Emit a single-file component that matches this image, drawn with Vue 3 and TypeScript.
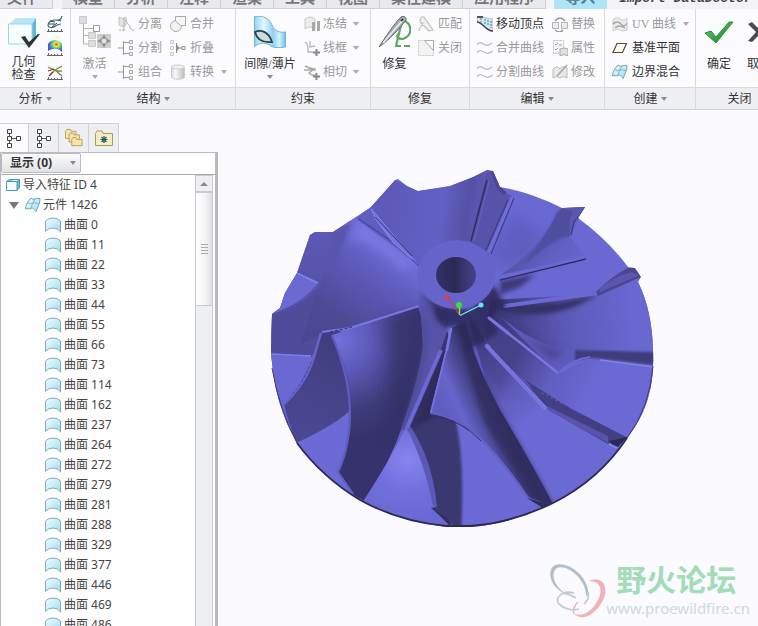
<script setup lang="ts">
import { ref } from 'vue'

interface Command {
  icon: string
  label: string
  off?: boolean
  menu?: boolean
}
interface BigCommand extends Command {
  lines: string[]
}
interface Group {
  id: string
  label: string
  menu?: boolean
  big: BigCommand[]
  columns: Command[][]
}

const tabs = ['模型', '分析', '注释', '渲染', '工具', '视图', '柔性建模', '应用程序', '导入']

const groups: Group[] = [
  {
    id: 'analysis', label: '分析', menu: true,
    big: [{ icon: 'geomcheck', label: '几何检查', lines: ['几何', '检查'] }],
    columns: [[
      { icon: 'curvature', label: '' },
      { icon: 'colormap', label: '' },
      { icon: 'knots', label: '' },
    ]],
  },
  {
    id: 'structure', label: '结构', menu: true,
    big: [{ icon: 'activate', label: '激活', lines: ['激活'], off: true, menu: true }],
    columns: [
      [
        { icon: 'separate', label: '分离', off: true },
        { icon: 'split', label: '分割', off: true },
        { icon: 'split', label: '组合', off: true },
      ],
      [
        { icon: 'merge', label: '合并', off: true },
        { icon: 'fold', label: '折叠', off: true },
        { icon: 'convert', label: '转换', off: true, menu: true },
      ],
    ],
  },
  {
    id: 'constrain', label: '约束',
    big: [{ icon: 'gap', label: '间隙/薄片', lines: ['间隙/薄片'], menu: true }],
    columns: [[
      { icon: 'freeze', label: '冻结', off: true, menu: true },
      { icon: 'wire', label: '线框', off: true, menu: true },
      { icon: 'tangent', label: '相切', off: true, menu: true },
    ]],
  },
  {
    id: 'repair', label: '修复',
    big: [{ icon: 'needle', label: '修复', lines: ['修复'] }],
    columns: [[
      { icon: 'match', label: '匹配', off: true },
      { icon: 'close', label: '关闭', off: true },
    ]],
  },
  {
    id: 'edit', label: '编辑', menu: true, big: [],
    columns: [
      [
        { icon: 'movevertex', label: '移动顶点' },
        { icon: 'curves', label: '合并曲线', off: true },
        { icon: 'curves', label: '分割曲线', off: true },
      ],
      [
        { icon: 'replace', label: '替换', off: true },
        { icon: 'props', label: '属性', off: true },
        { icon: 'modify', label: '修改', off: true },
      ],
    ],
  },
  {
    id: 'create', label: '创建', menu: true, big: [],
    columns: [[
      { icon: 'uv', label: 'UV 曲线', off: true, menu: true },
      { icon: 'plane', label: '基准平面' },
      { icon: 'quilt', label: '边界混合' },
    ]],
  },
  {
    id: 'finish', label: '关闭',
    big: [
      { icon: 'ok', label: '确定', lines: ['确定'] },
      { icon: 'cancel', label: '取消', lines: ['取消'] },
    ],
    columns: [],
  },
]

const navTabs = [
  { icon: 'tree', label: '模型树' },
  { icon: 'tree', label: '层树' },
  { icon: 'folders', label: '文件夹浏览器' },
  { icon: 'favorites', label: '收藏夹' },
]
const activeNav = ref(0)

const surfaces = [0, 11, 22, 33, 44, 55, 66, 73, 114, 162, 237, 264, 272, 279, 281, 288, 329, 377, 446, 469, 486]
const expanded = ref(true)
</script>

<template>
  <div class="app">
    <svg class="defs" aria-hidden="true">
      <defs>
        <linearGradient id="gBlue" x1="0" y1="0" x2="1" y2="1">
          <stop offset="0" stop-color="#f4fcff" /><stop offset="1" stop-color="#9cdcf2" />
        </linearGradient>
        <linearGradient id="gSheet" x1="0" y1="0" x2="1" y2="0">
          <stop offset="0" stop-color="#8fd4f2" /><stop offset=".3" stop-color="#e6f8ff" /><stop offset=".6" stop-color="#8fd0ee" /><stop offset=".8" stop-color="#d5f2fd" /><stop offset="1" stop-color="#6fbfe6" />
        </linearGradient>
        <radialGradient id="gRainbow" cx=".6" cy=".35" r=".6">
          <stop offset="0" stop-color="#ef3a2e" /><stop offset=".3" stop-color="#f3e43c" /><stop offset=".55" stop-color="#45d37a" /><stop offset=".8" stop-color="#3d7be8" /><stop offset="1" stop-color="#6a3fd0" />
        </radialGradient>
        <linearGradient id="gOk" x1="0" y1="0" x2="1" y2="1">
          <stop offset="0" stop-color="#6fd06a" /><stop offset="1" stop-color="#13782c" />
        </linearGradient>
        <linearGradient id="gGray" x1="0" y1="0" x2="1" y2="0">
          <stop offset="0" stop-color="#dcdcdc" /><stop offset=".3" stop-color="#f8f8f8" /><stop offset="1" stop-color="#bcbcbc" />
        </linearGradient>
      </defs>
      <symbol id="i-geomcheck" viewBox="0 0 32 32">
        <path d="M1 8 8 2h20l-4 6z" fill="#b9e6f5" />
        <path d="M24 8 28 2v18l-4 8z" fill="#5cb9d8" />
        <path d="M.5 8H24v20H.500z" fill="#f6fdff" stroke="#9bd5e8" />
        <path d="m13 21 4-1 4 6 9-8h2L21 32z" fill="#333" />
      </symbol>
      <symbol id="i-curvature" viewBox="0 0 16 16">
        <path d="M15 0c-1 5-4 4-7 4S1 6 1 9s4 3 6 2 3-3 7-3" fill="none" stroke="#2b6f7d" stroke-width="1.200" />
        <path d="m3 5 5 1m-6 2 6 0m-3 3 5-4M11 4l3 1" stroke="#444" fill="none" />
        <path d="M0 15.500h16M1.500 13v3m3-2v2m3-2v2m3-2v2m4-3v3" stroke="#666" fill="none" />
      </symbol>
      <symbol id="i-colormap" viewBox="0 0 16 16">
        <path d="M1 4c3-5 10-5 14 0v8c-4-4-9-4-14-1z" fill="url(#gRainbow)" />
        <path d="M0 15.500h16M1.500 13v3m3-2v2m3-2v2m3-2v2m4-3v3" stroke="#666" fill="none" />
      </symbol>
      <symbol id="i-knots" viewBox="0 0 16 16">
        <path d="M1 3c4 2 8 5 14 4M3 11l5-5 7-4M8 6l7 6" fill="none" stroke="#6d8a3a" stroke-width="1.300" />
        <path d="m1 7 6-2M2 12l4-4" stroke="#8a3a2f" stroke-width="1.200" />
        <path d="M0 15.500h16M1.500 13v3m3-2v2m3-2v2m3-2v2m4-3v3" stroke="#666" fill="none" />
      </symbol>
      <symbol id="i-activate" viewBox="0 0 32 32">
        <path d="M4.500 8v20H9M4.500 12.500h10M4.500 19.500H9" fill="none" stroke="#b0b0b0" />
        <path d="M.500.500h7v7h-7zM9.500 16.500h7v6h-7zM9.500 24.500h7v6h-7z" fill="#dcdcdc" stroke="#cacaca" />
        <path d="M14.500 9.500h6v6h-6z" fill="#fff" stroke="#999" />
        <path d="M18 18h14v14H18z" fill="#cdcdcd" />
        <path d="m25 18 2 4.500 5 2.500-5 2.500-2 4.500-2-4.500-5-2.500 5-2.500z" fill="#8a8a8a" />
        <circle cx="25" cy="25" r="2.500" fill="#e4e4e4" />
      </symbol>
      <symbol id="i-separate" viewBox="0 0 16 16">
        <path d="M1 1q3 3 7 0v8q-4 3-7 0z" fill="#e4e4e4" stroke="#c4c4c4" />
        <path d="M8 4c1 5 4 4 4 8l4 3M6 2v13" fill="none" stroke="#b0b0b0" /><path d="M1 14h2m1 0h2" stroke="#aaa" />
      </symbol>
      <symbol id="i-split" viewBox="0 0 16 16">
        <path d="M0 8h5M5.500 1v14M5.500 2.500H11M5.500 13.500H11" fill="none" stroke="#999" />
        <path d="M11.500.500h3v3h-3zM11.500 6.500h3v3h-3zM11.500 12.500h3v3h-3z" fill="#eee" stroke="#aaa" />
      </symbol>
      <symbol id="i-merge" viewBox="0 0 16 16">
        <circle cx="6" cy="10" r="5.500" fill="#f2f2f2" stroke="#aaa" /><path d="M5.500.500h10v9h-5L5.500 5z" fill="#f6f6f6" stroke="#aaa" />
      </symbol>
      <symbol id="i-fold" viewBox="0 0 16 16">
        <path d="M.500.500h3v3h-3zM.500 6.500h3v3h-3zM.500 12.500h3v3h-3z" fill="#f4f4f4" stroke="#bbb" stroke-dasharray="2 1" />
        <path d="M6.500 3v10M7 8h5" stroke="#888" /><path d="M12 6.500h3v3h-3z" fill="#eee" stroke="#999" /><path d="m7 5 3 3-3 3z" fill="#999" />
      </symbol>
      <symbol id="i-convert" viewBox="0 0 16 16">
        <path d="M1.500 3v10c0 3 13 3 13 0V3z" fill="url(#gGray)" stroke="#ccc" /><ellipse cx="8" cy="3" rx="6.500" ry="2" fill="#f0f0f0" stroke="#ccc" />
      </symbol>
      <symbol id="i-gap" viewBox="0 0 32 32">
        <path d="M.500.500C8-1 15 2 18 9c2 6 8 8 13.500 7v15c-7 1-13 1-16-2-5-3-11-2-15 1.500z" fill="url(#gSheet)" stroke="#6cb4d3" />
        <path d="M1 16c6-3 14 0 17 10-9 1-15-2-17-10z" fill="#cfdcde" stroke="#29444c" stroke-width="1.800" />
      </symbol>
      <symbol id="i-freeze" viewBox="0 0 16 16">
        <path d="M1 3q5-4 10 0v10q-5-4-10 0z" fill="#ececec" stroke="#c8c8c8" /><path d="M8 6h3v9H8zM13 5h3v10h-3z" fill="#a8a8a8" />
      </symbol>
      <symbol id="i-wire" viewBox="0 0 16 16">
        <path d="M1 2c3 2 3 5 3 10h5M6 1v6l5-1" fill="none" stroke="#b5b5b5" stroke-width="1.300" /><path d="M9 12.500h7M12.500 9v7" stroke="#888" stroke-width="2" />
      </symbol>
      <symbol id="i-tangent" viewBox="0 0 16 16">
        <path d="M1 2q5 3 9 3L5 9q3 3 6 2M0 6h12" fill="none" stroke="#aaa" stroke-width="1.500" /><path d="M9 12.500h7M12.500 9v7" stroke="#888" stroke-width="2" />
      </symbol>
      <symbol id="i-needle" viewBox="0 0 32 32">
        <path d="M26 5c7 4 8 14-2 18-5 0-7-2-5-5M22 9l-5 21M16 30h6m3 0h6" fill="none" stroke="#62a35f" stroke-width="2.200" />
        <path d="M0 31C6 22 14 9 22 1c3-2 6 1 5 3C21 12 10 24 0 31z" fill="#a5abaf" stroke="#5d6264" />
        <path d="M4 27 23 5" stroke="#f2f2f2" stroke-width="1.500" /><path d="m22 5 2-2" stroke="#222" stroke-width="1.500" />
      </symbol>
      <symbol id="i-match" viewBox="0 0 16 16">
        <path d="M2 6q0-6 4-5l9 13-4 1zM1 15c0-4 4-5 4-9" fill="#f0f0f0" stroke="#c2c2c2" stroke-width="1.200" />
      </symbol>
      <symbol id="i-close" viewBox="0 0 16 16">
        <path d="M.500.500h15v15H.500z" fill="#f2f2f2" stroke="#c8c8c8" stroke-dasharray="2 1" /><path d="M6.500.500h9v10z" fill="#fff" stroke="#aaa" />
      </symbol>
      <symbol id="i-movevertex" viewBox="0 0 16 16">
        <path d="M0 1c6-1 11 2 16 2v12C10 15 8 8 0 6z" fill="#d3e7ef" stroke="#b5c2c7" />
        <path d="M0 6c6 0 8 9 16 9" fill="none" stroke="#444" stroke-width="1.500" />
        <path d="M4 2v4m4-3v5m3-4v6m3-5v7" stroke="#2e7fa2" stroke-dasharray="2 1" /><path d="M0 0h6v2H0z" fill="#555" />
      </symbol>
      <symbol id="i-curves" viewBox="0 0 16 16">
        <path d="M0 5c5-7 7 5 15-2M0 13c5-7 7 5 16-2" fill="none" stroke="#bbb" stroke-width="1.300" />
      </symbol>
      <symbol id="i-replace" viewBox="0 0 16 16">
        <path d="M.500 6.500h6v6h-6zM9.500 6.500h6v6h-6z" fill="#ececec" stroke="#b5b5b5" /><path d="M3 5q5-6 10 0M3 14q5 4 8 0" fill="none" stroke="#999" stroke-width="1.400" />
      </symbol>
      <symbol id="i-props" viewBox="0 0 16 16">
        <path d="M1.500.500h10v13h-10z" fill="#f6f6f6" stroke="#c0c0c0" stroke-dasharray="2 1" /><path d="m3 4 1 1 2-2M3 9l1 1 2-2M7 5h3" fill="none" stroke="#999" /><path d="M8 9q4-2 8 0v7q-4-3-8 0z" fill="#e0e0e0" stroke="#aaa" />
      </symbol>
      <symbol id="i-modify" viewBox="0 0 16 16">
        <path d="M1 5q4-4 7 0 3-4 7-1v10q-4-3-7 0-3-3-7 0z" fill="#e8e8e8" stroke="#bbb" /><path d="M5 12 15 1" stroke="#aaa" stroke-width="1.800" />
      </symbol>
      <symbol id="i-uv" viewBox="0 0 16 16">
        <path d="M1 4q3-4 7-1t7-1v12q-4 2-7 0t-7 1z" fill="#ececec" stroke="#cacaca" /><path d="M1 8q4-4 8 0t6-1M3 12q4-4 10 0" fill="none" stroke="#a5a5a5" stroke-width="1.300" />
      </symbol>
      <symbol id="i-plane" viewBox="0 0 16 16">
        <path d="M5 3.500h9.500l-4 9H1z" fill="#fffdf2" stroke="#5c4a31" stroke-width="1.200" />
      </symbol>
      <symbol id="i-quilt" viewBox="0 0 16 16">
        <path d="M.500 12C1 7 3 4 6 1q2 2 4 1t5-.500c0 5-2 8-4 13-2-3-3-4-5-3s-4-.500-5.500.500z" fill="url(#gBlue)" stroke="#6fa6b9" />
        <path d="M3 6q3 1 5 0t6 1M10 2Q7 7 6 11" fill="none" stroke="#7fb3c5" />
      </symbol>
      <symbol id="i-ok" viewBox="0 0 32 32">
        <path d="m2 17 6-2 5 6L26 6h4L13 27z" fill="url(#gOk)" stroke="#2b8d3b" />
      </symbol>
      <symbol id="i-cancel" viewBox="0 0 32 32">
        <path d="m5 8 4-2 7 7 7-7 4 2-8 8 8 9-4 1-7-7-7 7-4-1 8-9z" fill="#484a50" />
      </symbol>
      <symbol id="i-tree" viewBox="0 0 18 20">
        <path d="M4.500 5v11M7 10.500h5" stroke="#555" fill="none" />
        <path d="M2.500 1.500h4v4h-4zM2.500 8.500h4v4h-4zM2.500 15.500h4v4h-4zM11.500 8.500h4v4h-4z" fill="#fff" stroke="#444" />
      </symbol>
      <symbol id="i-folders" viewBox="0 0 20 20">
        <g fill="#f8e3ac" stroke="#b39a5e">
          <path d="M.500 2.500 2 .500h4l1 2h5v8H.500z" /><path d="m4.500 6.500 1.500-2h3l1 2h6v8H4.500z" /><path d="m7.500 11.500 1.500-2h3l1 2h6v7H7.500z" />
        </g>
      </symbol>
      <symbol id="i-favorites" viewBox="0 0 18 18">
        <path d="M.500 4.500 2 2h5l1 2.500h9.500v12H.500z" fill="#fbecc0" stroke="#b39a5e" />
        <path d="M9 7v7m-3.500-3.500h7M6.500 8l5 5m0-5-5 5" stroke="#156070" stroke-width="1.200" />
      </symbol>
      <symbol id="i-part" viewBox="0 0 14 14">
        <path d="m.500 3.500 3-2h10l-2.500 2v9l2.500-3v-8" fill="#6cc3de" stroke="#4a9bb8" /><path d="M.500 3.500h10.500v9H.500z" fill="#f6fdff" stroke="#4a9bb8" />
      </symbol>
      <symbol id="i-surface" viewBox="0 0 16 16">
        <path d="M.500 4Q3 1 8 1t7.500 3v11Q13 11 8 11T.500 14.500z" fill="url(#gBlue)" stroke="#86aab8" />
      </symbol>
    </svg>

    <nav class="tabs" aria-label="功能区">
      <a class="tab file" href="#">文件<i class="caret" /></a>
      <a v-for="t in tabs" :key="t" href="#" class="tab" :class="{ active: t === '导入' }">{{ t }}</a>
      <span class="context">Import DataDoctor</span>
    </nav>

    <header class="ribbon">
      <section v-for="g in groups" :key="g.id" class="group" :class="g.id">
        <div class="commands">
          <button v-for="b in g.big" :key="b.icon" type="button" class="big" :disabled="b.off">
            <svg class="icon32"><use :href="'#i-' + b.icon" /></svg>
            <span class="big-label" :class="{ two: b.lines.length > 1 }">
              <span v-for="l in b.lines" :key="l">{{ l }}</span>
            </span>
            <i v-if="b.menu" class="caret" />
          </button>
          <div v-for="(col, ci) in g.columns" :key="ci" class="column">
            <button v-for="(c, i) in col" :key="i" type="button" class="small" :disabled="c.off">
              <svg class="icon16"><use :href="'#i-' + c.icon" /></svg>
              <span v-if="c.label">{{ c.label }}</span>
              <i v-if="c.menu" class="caret" />
            </button>
          </div>
        </div>
        <div class="caption">{{ g.label }}<i v-if="g.menu" class="caret" /></div>
      </section>
    </header>

    <main class="work">
      <aside class="side">
        <div class="nav-tabs">
          <button
            v-for="(n, i) in navTabs" :key="i" type="button" class="nav-tab"
            :class="{ on: i === activeNav }" :aria-label="n.label" @click="activeNav = i"
          >
            <svg class="icon-nav"><use :href="'#i-' + n.icon" /></svg>
          </button>
        </div>
        <div class="panel">
          <div class="filter">
            <button type="button" class="show">显示 (0)<i class="caret" /></button>
          </div>
          <div class="tree-box">
            <ul class="tree">
              <li class="row root"><svg class="icon14"><use href="#i-part" /></svg>导入特征 ID 4</li>
              <li class="row quilt">
                <button type="button" class="twist" aria-label="展开" @click="expanded = !expanded" />
                <svg class="icon16"><use href="#i-quilt" /></svg>元件 1426
              </li>
              <template v-if="expanded">
                <li v-for="s in surfaces" :key="s" class="row leaf">
                  <svg class="icon16"><use href="#i-surface" /></svg>曲面 {{ s }}
                </li>
              </template>
            </ul>
            <div class="scroll">
              <button type="button" class="scroll-up" aria-label="向上滚动"><i /></button>
              <div class="thumb"><i /><i /><i /><i /></div>
            </div>
          </div>
        </div>
      </aside>

      <div class="canvas">
        <svg class="model" viewBox="218 110 540 516" role="img" aria-label="叶轮">
          <defs>
            <clipPath id="sil">
              <path d="M271 350 272 314 280 308 285 293 297 273 310 235 315 232 333 232 370 208 395 180 398 179 407 186 418 191 450 186 473 177 487 170 493 171 500 187Q530 192 562 208L585 207 578 218Q608 240 628 267L635 268 641 277 638 282Q652 310 653 350Q655 385 643 412Q636 427 627 438Q599 480 553 503 Q512 524 470 527 L447 527 Q400 522 360 500 Q322 477 297 443 Q274 405 271 350z" />
            </clipPath>
            <filter id="s1" x="-30%" y="-30%" width="160%" height="160%"><feGaussianBlur stdDeviation="1" /></filter>
            <filter id="s2" x="-30%" y="-30%" width="160%" height="160%"><feGaussianBlur stdDeviation="2" /></filter>
            <filter id="s4" x="-50%" y="-50%" width="200%" height="200%"><feGaussianBlur stdDeviation="4" /></filter>
            <filter id="s6" x="-50%" y="-50%" width="200%" height="200%"><feGaussianBlur stdDeviation="7" /></filter>
            <linearGradient id="top" gradientUnits="userSpaceOnUse" x1="385" y1="190" x2="490" y2="205">
              <stop offset="0" stop-color="#5c59b8" /><stop offset=".55" stop-color="#6260c4" /><stop offset=".8" stop-color="#5451a4" /><stop offset="1" stop-color="#625fc4" />
            </linearGradient>
            <linearGradient id="left" gradientUnits="userSpaceOnUse" x1="390" y1="235" x2="310" y2="345">
              <stop offset="0" stop-color="#7674e0" /><stop offset=".3" stop-color="#5f5cbe" /><stop offset=".7" stop-color="#4d4a96" /><stop offset="1" stop-color="#4a4791" />
            </linearGradient>
            <linearGradient id="far" gradientUnits="userSpaceOnUse" x1="330" y1="225" x2="300" y2="340">
              <stop offset="0" stop-color="#5e5bba" /><stop offset="1" stop-color="#4e4b98" />
            </linearGradient>
            <radialGradient id="b3" gradientUnits="userSpaceOnUse" cx="338" cy="340" r="100">
              <stop offset="0" stop-color="#7371dd" /><stop offset=".35" stop-color="#5b58b6" /><stop offset=".75" stop-color="#3d3a78" /><stop offset="1" stop-color="#36336c" />
            </radialGradient>
            <linearGradient id="b2" gradientUnits="userSpaceOnUse" x1="300" y1="435" x2="340" y2="350">
              <stop offset="0" stop-color="#4b4893" /><stop offset="1" stop-color="#413e7f" />
            </linearGradient>
            <linearGradient id="b5" gradientUnits="userSpaceOnUse" x1="437" y1="395" x2="492" y2="370">
              <stop offset="0" stop-color="#605dc0" /><stop offset=".25" stop-color="#6765ca" /><stop offset=".55" stop-color="#494690" /><stop offset=".85" stop-color="#2f2c5b" /><stop offset="1" stop-color="#35326a" />
            </linearGradient>
            <linearGradient id="w6" gradientUnits="userSpaceOnUse" x1="475" y1="340" x2="530" y2="420">
              <stop offset="0" stop-color="#3f3c7c" /><stop offset=".5" stop-color="#5956b0" /><stop offset="1" stop-color="#6b69d3" />
            </linearGradient>
            <linearGradient id="w7" gradientUnits="userSpaceOnUse" x1="512" y1="360" x2="590" y2="395">
              <stop offset="0" stop-color="#45428a" /><stop offset=".5" stop-color="#605ec0" /><stop offset="1" stop-color="#6b69d3" />
            </linearGradient>
            <linearGradient id="w8" gradientUnits="userSpaceOnUse" x1="495" y1="320" x2="630" y2="310">
              <stop offset="0" stop-color="#3a3773" /><stop offset=".5" stop-color="#5b59b6" /><stop offset="1" stop-color="#6967d0" />
            </linearGradient>
            <radialGradient id="w4" gradientUnits="userSpaceOnUse" cx="408" cy="460" r="62">
              <stop offset="0" stop-color="#8785ee" /><stop offset=".5" stop-color="#7270dd" /><stop offset="1" stop-color="#6a68d2" />
            </radialGradient>
            <linearGradient id="b9" gradientUnits="userSpaceOnUse" x1="530" y1="235" x2="570" y2="270">
              <stop offset="0" stop-color="#5451a6" /><stop offset=".6" stop-color="#6260c3" /><stop offset="1" stop-color="#6765ca" />
            </linearGradient>
            <linearGradient id="hole" x1="0" y1="0" x2="1" y2="0">
              <stop offset="0" stop-color="#35326a" /><stop offset=".45" stop-color="#2b2853" /><stop offset="1" stop-color="#46438c" />
            </linearGradient>
          </defs>
          <g clip-path="url(#sil)">
            <path d="M260 160H670V540H260z" fill="#6a68d2" />
            <path d="M490 256 510 270 528 262 545 238 515 215z" fill="#5c5ab8" opacity=".7" filter="url(#s6)" />
            <path d="M370 208 395 180 407 186 418 191 450 186 473 177 487 170 488 182 470 250 418 268z" fill="url(#top)" />
            <path d="M487 170 493 171 501 190 513 197 488 256 470 243z" fill="#5653a9" />
            <path d="M493 170 500 186 507 193 503 195 497 188 491 173z" fill="#4a4790" />
            <path d="M487 180 471 241" stroke="#302d60" stroke-width="1.500" /><path d="M489 182 474 241" stroke="#6664ca" />
            <path d="M512 197 488 253" stroke="#6f6dd8" stroke-width="3" /><path d="M514 198 491 254M508 200 486 250" stroke="#3b3874" />

            <path d="M260 340 260 225 315 225 333 232 370 208 360 240 330 340z" fill="url(#far)" />
            <path d="M270 362V318Q306 307 330 275L335 325 322 335 312 357z" fill="#4f4c99" />
            <path d="M333 232 370 206 420 266 424 308 322 334 300 345 325 270Q342 250 347 232z" fill="url(#left)" />
            <path d="M331 231 352 222Q344 237 338 258 330 268 322 275 336 255 331 231z" fill="#5855ad" filter="url(#s2)" />
            <path d="M360 221Q378 236 414 266L402 272Q372 240 350 240z" fill="#8482ed" opacity=".55" filter="url(#s4)" />
            <path d="M356 219 371 206 375 218 393 242 419 266 399 250z" fill="#605dbf" />
            <path d="M359 219 390 240 419 266" fill="none" stroke="#413e80" />
            <path d="M371 209 376 219 393 242 412 259" fill="none" stroke="#807ee8" stroke-width="1.500" />
            <path d="M375 217 397 240 412 256" fill="none" stroke="#36336c" />
            <path d="M272 314 280 308 285 293 297 273 318 283Q302 304 272 314z" fill="#6b69d3" />
            <path d="M297 273 318 283" stroke="#8482ea" stroke-width="1.800" />
            <path d="M270 354 311 356Q306 384 284 407L270 400z" fill="#6a68d2" />
            <path d="M270 354 311 356" stroke="#807ee6" stroke-width="1.500" />
            <path d="M322 332 340 330 352 400 350 415 297 445 283 405Q308 380 322 332z" fill="url(#b2)" />
            <path d="M321 333Q317 346 314 357Q306 384 283 405L288 425" fill="none" stroke="#6765ca" stroke-width="2.500" />
            <path d="M311 362Q305 381 290 397" fill="none" stroke="#4a4790" stroke-dasharray="2 3" />
            <path d="M296 443Q328 429 350 411L351 440 338 472 354 496 340 500z" fill="#6c6ad5" />
            <path d="M332 335 418 307 430 340Q420 375 403 424 391 462 364 501L354 495 338 472Q354 440 350 395 347 365 332 335z" fill="url(#b3)" />
            <path d="M385 320 424 310 424 350Q414 410 390 440 392 380 385 320z" fill="#302d60" opacity=".55" filter="url(#s6)" />
            <path d="M332 335Q346 368 349 396 353 440 338 472L353 494" fill="none" stroke="#605dc0" stroke-width="2.200" />
            <path d="M322 332 350 328 419 306" fill="none" stroke="#7876e0" stroke-width="2.200" />
            <path d="M330 332 352 327" stroke="#35326a" stroke-dasharray="3 2" />

            <path d="M420 306 450 310 442 352 407 430 401 430Q420 375 423 345z" fill="#5754aa" />
            <path d="M424 320Q432 345 403 428" fill="none" stroke="#4a4790" stroke-width="4" opacity=".7" filter="url(#s2)" />
            <path d="M406 427Q395 452 364 500L360 530H460L449 523 431 508 435 507Q428 465 406 427z" fill="url(#w4)" />
            <path d="M447 330 470 410 463 530 449 523 431 508 436 507Q430 465 407 427L441 350z" fill="#3a3771" />
            <path d="M445 345 448 410 412 428z" fill="#2f2c5b" filter="url(#s2)" />
            <path d="M407 429Q424 461 433 506L437 507Q433 460 409 424z" fill="#5b58b6" />
            <path d="M441 350 407 428" stroke="#6b69d3" stroke-width="4" /><path d="M444 353 411 428" stroke="#302d60" />
            <path d="M455 420Q464 455 461 530L560 530 528 497 475 435z" fill="#6c6ad5" />
            <path d="M456 424Q464 460 461 527" fill="none" stroke="#4a4790" stroke-width="2" filter="url(#s1)" />
            <path d="M466 310 488 345 547 409 625 450 600 500 553 506 500 430z" fill="url(#w6)" />
            <path d="M451 328 466 322Q470 352 500 410 530 460 554 506L528 497Q493 447 474 433 455 418 430 413L446 350z" fill="url(#b5)" />
            <path d="M468 335Q478 372 500 410 530 460 554 506L532 498Q505 455 486 425 472 385 462 345z" fill="#312e60" opacity=".8" filter="url(#s2)" />
            <path d="M470 330 490 345 510 375 498 395 478 355z" fill="#45428a" opacity=".6" filter="url(#s4)" />
            <path d="M430 413Q463 417 485 443 508 468 529 499" fill="none" stroke="#6361c5" stroke-width="2.200" /><path d="M430 415Q462 420 481 441" fill="none" stroke="#35326a" />
            <path d="M451 328 446 352 431 412" fill="none" stroke="#7674df" stroke-width="1.800" />
            <path d="M527 498 552 505 546 510z" fill="#302d60" /><path d="M431 507 449 520 452 528 447 523z" fill="#302d60" />

            <path d="M487 315 558 374 592 357 655 366V410L627 440 570 408 527 383 486 345z" fill="url(#w7)" />
            <path d="M525 380 547 409 608 444 628 438 570 408z" fill="#433f82" />
            <path d="M545 405 608 436 608 443 546 409z" fill="#5754aa" />
            <path d="M609 441 627 437 618 447 612 446z" fill="#2c2958" /><path d="M609 444 617 448" stroke="#8583ea" stroke-width="2" />
            <path d="M542 393 563 404" stroke="#6a68d2" stroke-dasharray="2 3" />
            <path d="M487 346 545 408" stroke="#7674df" stroke-width="4.500" stroke-linecap="round" /><path d="M491 347 548 407" stroke="#403d7d" />
            <path d="M490 300 597 294 638 280 656 300V350Q610 356 582 350L558 373 488 317z" fill="url(#w8)" />
            <path d="M500 316Q540 352 594 351L600 357Q570 360 558 374z" fill="#5f5cbe" />
            <path d="M512 325Q535 345 566 352L552 360z" fill="#413e80" opacity=".8" filter="url(#s4)" />
            <path d="M575 350 654 352V365L594 358Q585 356 575 361z" fill="#403d7d" filter="url(#s1)" />
            <path d="M600 360 654 367" stroke="#8583ea" stroke-width="1.500" />
            <path d="M490 319Q523 345 558 373" fill="none" stroke="#7876e0" stroke-width="2.500" /><path d="M558 373Q572 359 590 357" fill="none" stroke="#6f6dd8" stroke-width="1.500" />

            <path d="M498 305 560 302 597 295Q555 322 505 312z" fill="#343168" filter="url(#s2)" />
            <path d="M505 306 597 293" stroke="#6b69d3" stroke-width="4" stroke-linecap="round" />
            <path d="M596 292Q612 276 628 268L635 268 641 277 598 296z" fill="#4a4790" /><path d="M600 288Q614 277 631 272L640 275 600 292z" fill="#5a57b2" />
            <path d="M500 275Q536 254 557 214L562 208 585 207 574 223 570 237 586 257z" fill="url(#b9)" />
            <path d="M520 268Q543 243 557 213L562 208 586 207 575 222 570 236Q553 238 520 268z" fill="#504d9d" filter="url(#s1)" />
            <path d="M562 208 586 207 575 220 570 235Q567 222 573 212z" fill="#5a57b2" /><path d="M585 208 574 222 571 235" fill="none" stroke="#3b3874" />
            <path d="M500 281 535 274 522 286 500 295z" fill="#3e3b7a" filter="url(#s2)" />
            <path d="M498 278 585 257" stroke="#6b69d3" stroke-width="2.500" /><path d="M500 280 586 259" stroke="#302d60" stroke-width="1.300" />

            <path d="M422 295 440 305 470 310 494 285 506 306 492 316 498 332 484 342 468 350 456 326 446 328 436 320z" fill="#2e2b5c" opacity=".9" filter="url(#s2)" />
            <path d="M419 290 432 300 441 345 428 335z" fill="#5451a6" opacity=".7" filter="url(#s2)" />
            <path d="M489 318 508 333" stroke="#7876e0" stroke-width="3" stroke-linecap="round" /><path d="M451 329 447 350" stroke="#7876e0" stroke-width="2.500" stroke-linecap="round" />
          </g>
          <path d="M297 443Q322 477 360 500 Q400 522 447 526 L470 526 Q512 523 553 503 Q599 480 627 438" fill="none" stroke="#2c2958" stroke-width="1.800" />
          <path d="M272 368Q279 409 297 443M627 438Q650 407 653 366" fill="none" stroke="#3b3874" />
          <ellipse cx="456.500" cy="274.500" rx="39" ry="34.500" fill="#6664ca" />
          <ellipse cx="456" cy="275" rx="20" ry="18" fill="url(#hole)" />
          <path d="M447 297 459 314" stroke="#cf3a4c" stroke-width="1.200" /><circle cx="447" cy="297" r="2.500" fill="#d0405a" />
          <path d="M459.500 304V315" stroke="#9be04a" stroke-width="1.500" /><circle cx="459" cy="305" r="3" fill="#2ee62e" />
          <path d="M460 315.500 481 305" stroke="#6be8f2" stroke-width="1.300" /><circle cx="481" cy="305" r="2.500" fill="#5fe9f7" />
        </svg>

        <div class="watermark">
          <svg class="wm-logo" viewBox="0 0 58 56">
            <path d="M40 34C43 18 22-2 7 3-4 10 6 29 17 31 8 26 1 12 9 6 19 2 38 17 38 33z" fill="#b3becb" />
            <path d="M41 19C55 13 62 26 54 40 46 54 34 59 26 52 36 55 44 49 50 38 56 26 51 19 41 19z" fill="#eeb2b9" />
            <path d="M26 52q-2-6 4-12" fill="none" stroke="#eeb2b9" stroke-width="1.500" />
            <path d="M26 31C14 28 6 36 11 42c5 5 13 7 20 5M15 31q7 1 13 5M40 30q2 7-4 12" fill="none" stroke="#c3cbd4" stroke-width="1.800" />
          </svg>
          <div class="wm-text">
            <strong>野火论坛</strong>
            <span>www.proewildfire.cn</span>
          </div>
        </div>
      </div>
    </main>
  </div>
</template>

<style>
body {
  margin: 0;
  overflow: hidden;
  background: #fafaff;
}
</style>

<style scoped>
.app {
  height: 100vh;
  display: flex;
  flex-direction: column;
  overflow: hidden;
  font: 12px/14px "Noto Sans", "Noto Sans CJK SC", sans-serif;
  color: #333;
}
.defs {
  position: absolute;
  width: 0;
  height: 0;
}
button {
  margin: 0;
  padding: 0;
  border: 0;
  background: none;
  font: inherit;
  color: inherit;
}
svg {
  display: block;
  flex: none;
}
.icon32 { width: 32px; height: 32px; }
.icon-nav { width: 18px; height: 20px; }
.icon16 { width: 16px; height: 16px; }
.icon14 { width: 14px; height: 14px; }
.caret {
  flex: none;
  border: 3px solid transparent;
  border-top: 4px solid #8a8a8a;
  border-bottom: 0;
}

.tabs {
  flex: none;
  display: flex;
  align-items: flex-end;
  height: 9px;
  overflow: hidden;
  background: #f3f3f6;
  white-space: nowrap;
}
.tab {
  flex: none;
  display: flex;
  align-items: center;
  height: 22px;
  padding: 0 11px;
  box-sizing: border-box;
  border-right: 1px solid #cfcfd4;
  border-bottom: 1px solid #cfcfd4;
  background: #e9eaee;
  font-size: 15px;
  font-weight: 700;
  line-height: 15px;
  color: #777;
  text-decoration: none;
}
.tab.file {
  margin-right: 9px;
  padding: 0 7px;
  gap: 2px;
}
.tab.active {
  margin-left: 8px;
  background: #aee4f7;
  border-color: #aee4f7;
  color: #557f8e;
}
.context {
  padding-left: 12px;
  height: 22px;
  font: italic 700 13px/24px "Liberation Mono", monospace;
  color: #444;
}

.ribbon {
  flex: none;
  display: flex;
  overflow: hidden;
  background: #fcfcfe;
  border-bottom: 1px solid #cfcfd4;
  font-family: "Liberation Serif", "Noto Sans CJK SC", serif;
  white-space: nowrap;
}
.group {
  flex: none;
  box-sizing: border-box;
  border-right: 1px solid #d9dade;
  display: flex;
  flex-direction: column;
}
.analysis { width: 71px; }
.structure { width: 165px; }
.constrain { width: 135px; }
.repair { width: 99px; }
.edit { width: 135px; }
.create { width: 91px; }
.finish { width: 88px; }
.commands {
  display: flex;
  height: 75px;
  padding-top: 3px;
}
.edit .commands,
.create .commands {
  padding-left: 7px;
}
.big {
  flex: none;
  width: 47px;
  padding-top: 4px;
  display: flex;
  flex-direction: column;
  align-items: center;
  justify-content: flex-start;
}
.constrain .big { width: 68px; }
.finish .big { width: 46px; }
.finish .big + .big { width: 34px; }
.big-label {
  display: flex;
  flex-direction: column;
  line-height: 14px;
  padding: 9px 0 4px;
}
.big-label.two {
  padding-top: 8px;
  line-height: 13px;
}
.column {
  display: flex;
  flex-direction: column;
}
.column + .column { margin-left: 8px; }
.small {
  display: flex;
  align-items: center;
  gap: 4px;
  height: 24px;
}
.small .caret { margin-left: 3px; }
.constrain .small,
.edit .small { gap: 3px; }
button:disabled { color: #999; }
button:disabled .caret { border-top-color: #aaa; }
.caption {
  height: 21px;
  display: flex;
  align-items: center;
  justify-content: center;
  gap: 3px;
  border-top: 1px solid #dcdde1;
  background: #eeeff2;
}

.work {
  flex: 1;
  min-height: 0;
  display: flex;
}
.side {
  flex: none;
  width: 218px;
  padding-top: 13px;
  display: flex;
  flex-direction: column;
}
.nav-tabs { display: flex; }
.nav-tab {
  width: 30px;
  height: 29px;
  box-sizing: border-box;
  display: flex;
  align-items: center;
  justify-content: center;
  border: 1px solid #cfcfd4;
  border-width: 1px 1px 0 0;
  background: #eeeff2;
}
.nav-tab:first-child { width: 29px; }
.nav-tab.on { background: #fcfcfe; }
.panel {
  flex: 1;
  min-height: 0;
  display: flex;
  flex-direction: column;
  border: 1px solid #b9bac0;
  border-width: 1px 3px 0 1px;
}
.filter {
  height: 21px;
  background: #fff;
  border-bottom: 1px solid #aaabb0;
}
.show {
  width: 80px;
  height: 20px;
  padding: 0 4px 0 8px;
  display: flex;
  align-items: center;
  justify-content: space-between;
  border: 1px solid #bbb;
  border-radius: 2px;
  box-sizing: border-box;
  background: linear-gradient(#fafafa, #e2e3e6);
  font-weight: 700;
}
.tree-box {
  flex: 1;
  min-height: 0;
  display: flex;
  background: #fff;
}
.tree {
  flex: 1;
  margin: 0;
  padding: 0;
  overflow: hidden;
  list-style: none;
}
.row {
  height: 20px;
  display: flex;
  align-items: center;
  gap: 3px;
  white-space: nowrap;
  color: #444;
}
.root { padding-left: 5px; }
.quilt { padding-left: 8px; gap: 2px; }
.leaf { padding-left: 44px; }
.twist {
  border: 5px solid transparent;
  border-top: 7px solid #777;
  border-bottom: 0;
  margin-right: 4px;
}
.scroll {
  flex: none;
  width: 18px;
  margin-right: 2px;
  border: 1px solid #c9cacf;
  border-bottom: 0;
  box-sizing: border-box;
  background: #eeeff2;
}
.scroll-up {
  width: 100%;
  height: 16px;
  display: flex;
  align-items: center;
  justify-content: center;
  border-bottom: 1px solid #c9cacf;
}
.scroll-up i {
  border: 4px solid transparent;
  border-bottom-color: #888;
  border-top: 0;
}
.thumb {
  height: 112px;
  display: flex;
  flex-direction: column;
  align-items: center;
  justify-content: center;
  gap: 2px;
  border: 1px solid #c9cacf;
  border-width: 1px 0;
  background: linear-gradient(90deg, #fff, #f3f3f5 60%, #dcdde0);
}
.thumb i {
  width: 7px;
  height: 1px;
  background: #aaa;
}

.canvas {
  position: relative;
  flex: 1;
  min-width: 0;
  background: #fafaff;
}
.model {
  width: 100%;
  height: 100%;
}
.watermark {
  position: absolute;
  right: 8px;
  bottom: 8px;
  display: flex;
}
.wm-logo {
  width: 58px;
  height: 56px;
}
.wm-text {
  display: flex;
  flex-direction: column;
  font-size: 15px;
  line-height: 20px;
  color: #c9dbe2;
}
.wm-text strong {
  padding-left: 10px;
  font-size: 30px;
  line-height: 36px;
  color: #a3dcb6;
}
</style>
